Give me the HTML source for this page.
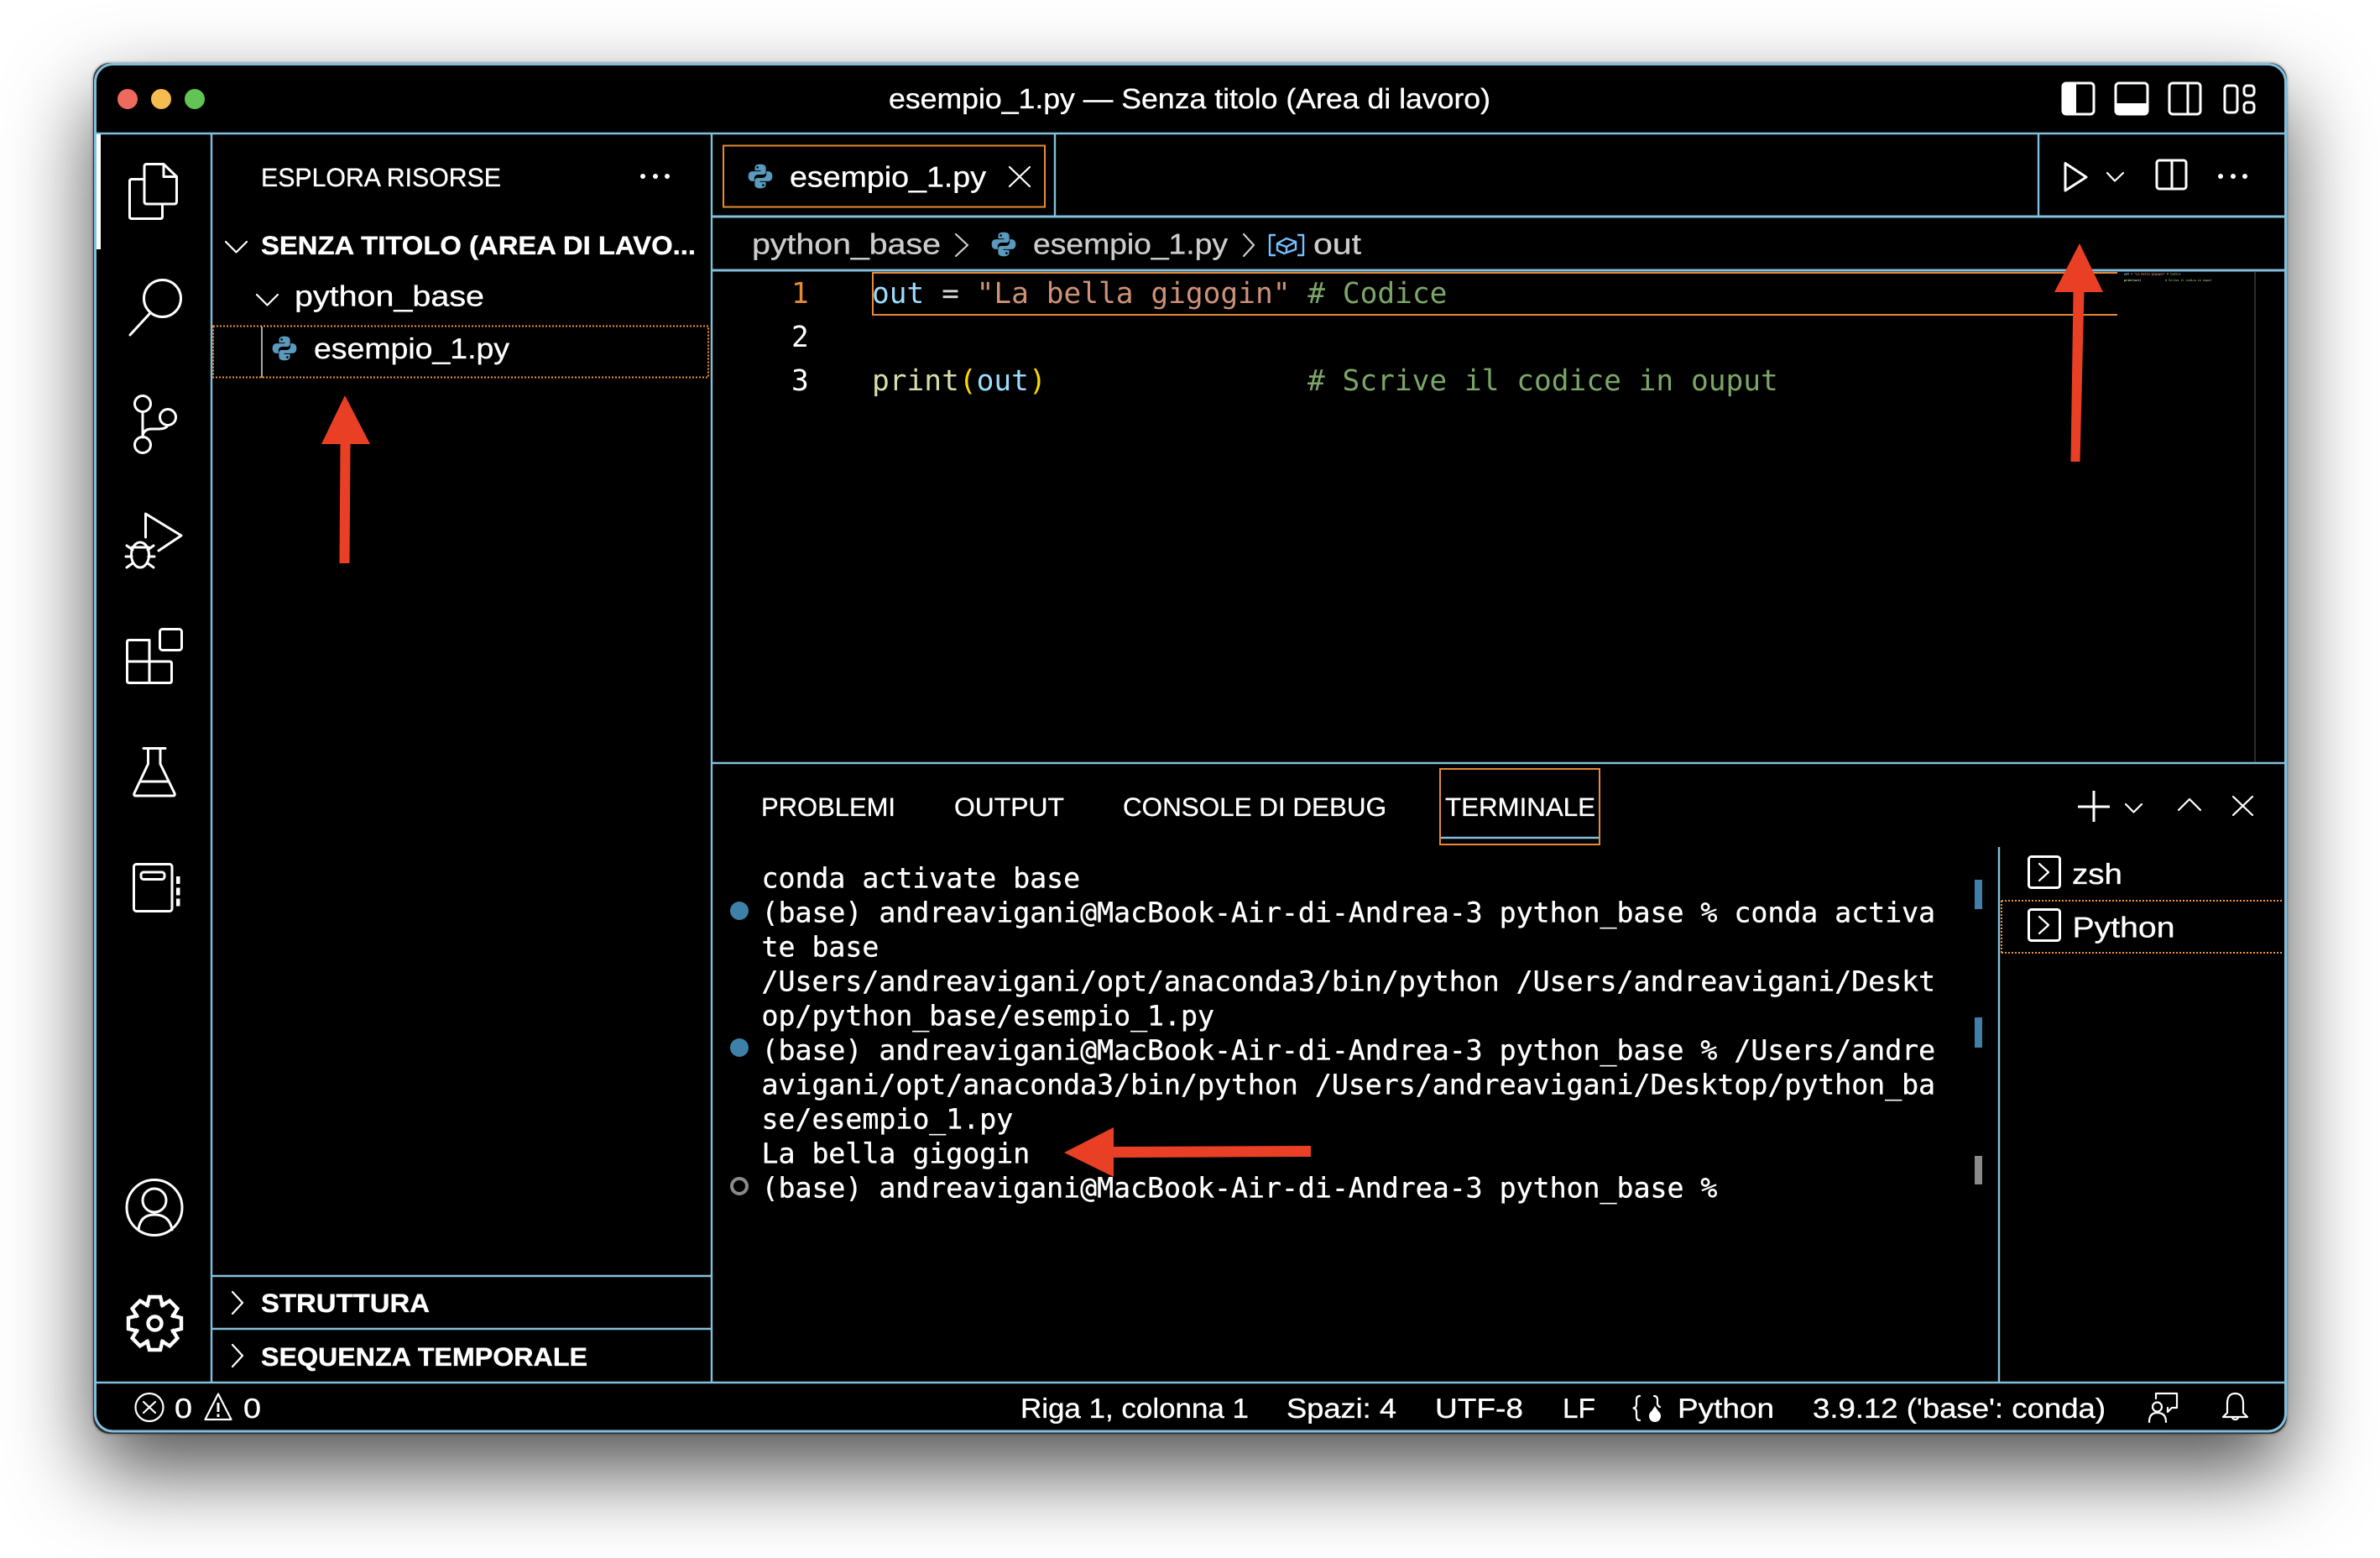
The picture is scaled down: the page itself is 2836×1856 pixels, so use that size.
<!DOCTYPE html>
<html lang="it">
<head>
<meta charset="utf-8">
<title>esempio_1.py</title>
<style>
html,body{margin:0;padding:0;background:#fff;width:2836px;height:1856px;overflow:hidden}
#win{position:absolute;left:111px;top:75px;width:2614px;height:1633px;border-radius:20px;background:#2e2e2e;box-shadow:0 44px 100px rgba(0,0,0,.69),0 0 3px rgba(0,0,0,.5)}
svg{position:absolute;left:0;top:0}
text{font-family:"Liberation Sans",sans-serif;fill:#fff;text-rendering:geometricPrecision;white-space:pre;stroke:#fff;stroke-width:.35px}
.b{font-weight:700}
.m{font-family:"DejaVu Sans Mono","Liberation Mono",monospace}
.t{font-size:33.2px}
.e{font-size:34.5px;stroke:none}
.i{fill:none;stroke:#fff;stroke-width:3;stroke-linejoin:round;stroke-linecap:round}
.j{fill:none;stroke:#fff;stroke-width:2.2;stroke-linejoin:round;stroke-linecap:round}
.l{stroke:#82bfdc;fill:none}
</style>
</head>
<body>
<div id="win"></div>
<svg width="2836" height="1856" viewBox="0 0 2836 1856" xmlns="http://www.w3.org/2000/svg">
<defs>
<symbol id="py" viewBox="0 0 23 23">
<path fill="#5b9abf" d="M11.6.5C7 .5 6.5 2.4 6.5 4V6.2H11.9V7H4.2C2 7 .5 8.7.5 11.5S2 16 4.2 16H6V13.6C6 11.4 7.6 10 9.6 10H14C15.6 10 16.6 8.9 16.6 7.4V4C16.6 2 15.2.5 11.6.5Z"/>
<circle cx="8.9" cy="3.4" r="1" fill="#000"/>
<path fill="#5b9abf" d="M11.4 22.5C16 22.5 16.5 20.6 16.5 19V16.8H11.1V16H18.8C21 16 22.5 14.3 22.5 11.5S21 7 18.8 7H17V9.4C17 11.6 15.4 13 13.4 13H9C7.4 13 6.4 14.1 6.4 15.6V19C6.4 21 7.8 22.5 11.4 22.5Z"/>
<circle cx="14.1" cy="19.6" r="1" fill="#000"/>
</symbol>
</defs>

<!-- window frame -->
<rect x="113.5" y="76.5" width="2610" height="1628.5" rx="21" fill="#000" stroke="#82bfdc" stroke-width="3"/>

<!-- structure lines -->
<path class="l" stroke-width="2.4" d="M115 159H2722"/>
<path class="l" stroke-width="2.4" d="M252 159V1647"/>
<path class="l" stroke-width="2.4" d="M848 159V1647"/>
<path class="l" stroke-width="2.4" d="M1257 159V258"/>
<path class="l" stroke-width="2.4" d="M2429 159V258"/>
<path class="l" stroke-width="3" d="M848 258H2722"/>
<path class="l" stroke-width="3" d="M848 322H2722"/>
<path class="l" stroke-width="2.4" d="M848 909H2722"/>
<path class="l" stroke-width="2.4" d="M2382 1009V1647"/>
<path class="l" stroke-width="2.4" d="M253 1520H847"/>
<path class="l" stroke-width="2.4" d="M253 1583H847"/>
<path class="l" stroke-width="2.4" d="M115 1647H2722"/>
<path stroke="#3a3a3a" stroke-width="1.5" d="M2687 324V908"/>

<!-- traffic lights -->
<circle cx="152" cy="118" r="12" fill="#ee6a5f"/>
<circle cx="192" cy="118" r="12" fill="#f5bd4f"/>
<circle cx="232" cy="118" r="12" fill="#61c454"/>

<!-- title -->
<text x="1059" y="129" font-size="33.5" textLength="717" lengthAdjust="spacingAndGlyphs">esempio_1.py — Senza titolo (Area di lavoro)</text>

<!-- layout icons -->
<rect x="2458" y="99" width="37" height="37" rx="4" fill="none" stroke="#fff" stroke-width="3"/>
<path fill="#fff" d="M2462 98H2474V137H2462Q2457 137 2457 132V103Q2457 98 2462 98Z"/>
<rect x="2521" y="99" width="38" height="37" rx="4" fill="none" stroke="#fff" stroke-width="3"/>
<path fill="#fff" d="M2520 123H2560V132Q2560 137 2555 137H2525Q2520 137 2520 132Z"/>
<rect x="2585" y="99" width="37" height="37" rx="4" fill="none" stroke="#fff" stroke-width="3"/>
<path stroke="#fff" stroke-width="3" d="M2607 99V136"/>
<rect x="2651" y="102" width="15" height="32" rx="4" fill="none" stroke="#fff" stroke-width="3"/>
<rect x="2674" y="102" width="12" height="12" rx="4" fill="none" stroke="#fff" stroke-width="3"/>
<rect x="2674" y="122" width="12" height="12" rx="4" fill="none" stroke="#fff" stroke-width="3"/>

<!-- activity bar -->
<rect x="115" y="160" width="5" height="137" fill="#fff"/>
<g class="i">
<path d="M175 195.5H195L210.5 210.5V240Q210.5 243 207.5 243H175Q172 243 172 240V198.5Q172 195.5 175 195.5Z"/>
<path d="M195 196V210.5H210"/>
<path d="M172 213.5H157Q154.5 213.5 154.5 216V258Q154.5 260.5 157 260.5H191Q193.5 260.5 193.5 258V244"/>
<circle cx="193.5" cy="355.5" r="22"/>
<path d="M178 374L155 399"/>
<circle cx="170" cy="481" r="9.5"/>
<circle cx="170" cy="530" r="9.5"/>
<circle cx="200" cy="497" r="9.5"/>
<path d="M170 490.5V520.5"/>
<path d="M170 521Q170 511 181 511H189Q198 511 200 506.5"/>
<path d="M173.5 640V612L216 638L189 656"/>
<ellipse cx="167" cy="661" rx="10.5" ry="15"/>
<path d="M157 652H177M151 650L158 655M150 663H157M151 676L158 671M183 650L176 655M184 663H177M183 676L176 671"/>
<path d="M154 762.5H178V813.5H154Q151.5 813.5 151.5 811V765Q151.5 762.5 154 762.5ZM151.5 788H202Q204.5 788 204.5 790.5V811Q204.5 813.5 202 813.5H178"/>
<rect x="190.5" y="749.5" width="26" height="25" rx="3"/>
<path d="M171 891.5H197M176.5 891.5V910L160 945Q159 948 162 948H206Q209 948 208 945L191 910V891.5M168 931H200"/>
<rect x="159.5" y="1029.5" width="45.5" height="56" rx="3"/>
<rect x="168" y="1039" width="28" height="8.5" rx="3"/>
</g>
<path fill="#fff" d="M210 1044h4.5v9h-4.5zM210 1057.5h4.5v9h-4.5zM210 1070.5h4.5v9h-4.5z"/>
<g class="i">
<circle cx="184" cy="1438.5" r="33"/>
<circle cx="184" cy="1430" r="14"/>
<path d="M165 1465Q167 1447 184 1447Q202 1447 205 1465"/>
</g>
<g fill="none" stroke="#fff" stroke-width="4.4" stroke-linejoin="miter" stroke-linecap="square" transform="translate(184.5 1576.5)">
<path d="M-9-21.5L-6.5-31.5H6.5L9-21.5"/>
<path transform="rotate(45)" d="M-9-21.5L-6.5-31.5H6.5L9-21.5"/>
<path transform="rotate(90)" d="M-9-21.5L-6.5-31.5H6.5L9-21.5"/>
<path transform="rotate(135)" d="M-9-21.5L-6.5-31.5H6.5L9-21.5"/>
<path transform="rotate(180)" d="M-9-21.5L-6.5-31.5H6.5L9-21.5"/>
<path transform="rotate(225)" d="M-9-21.5L-6.5-31.5H6.5L9-21.5"/>
<path transform="rotate(270)" d="M-9-21.5L-6.5-31.5H6.5L9-21.5"/>
<path transform="rotate(315)" d="M-9-21.5L-6.5-31.5H6.5L9-21.5"/>
<circle cx="0" cy="0" r="8"/>
</g>

<!-- sidebar -->
<text x="311" y="222" font-size="31" textLength="286" lengthAdjust="spacingAndGlyphs">ESPLORA RISORSE</text>
<circle cx="766" cy="210" r="3" fill="#fff"/><circle cx="781" cy="210" r="3" fill="#fff"/><circle cx="795" cy="210" r="3" fill="#fff"/>
<path class="j" d="M269 288L281.5 300.5L294 288"/>
<text class="b" x="311" y="303" font-size="31" textLength="518" lengthAdjust="spacingAndGlyphs">SENZA TITOLO (AREA DI LAVO...</text>
<path class="j" d="M306 351L318.5 363.5L331 351"/>
<text x="351" y="364.500" font-size="34.5" textLength="226" lengthAdjust="spacingAndGlyphs">python_base</text>
<rect x="254" y="388.5" width="590" height="61" fill="none" stroke="#f0923a" stroke-width="2" stroke-dasharray="2 2"/>
<path stroke="#a8a8a8" stroke-width="2" d="M312 389V450"/>
<use href="#py" x="324" y="400" width="30" height="30"/>
<text x="374" y="427" font-size="34.5" textLength="233" lengthAdjust="spacingAndGlyphs">esempio_1.py</text>
<path class="j" d="M277 1539L289 1552L277 1565"/>
<text class="b" x="311" y="1563" font-size="31" textLength="201" lengthAdjust="spacingAndGlyphs">STRUTTURA</text>
<path class="j" d="M277 1602L289 1615L277 1628"/>
<text class="b" x="311" y="1627" font-size="31" textLength="389" lengthAdjust="spacingAndGlyphs">SEQUENZA TEMPORALE</text>

<!-- tab -->
<rect x="862" y="173.5" width="383" height="73" fill="none" stroke="#e88a35" stroke-width="2"/>
<use href="#py" x="891" y="195" width="30" height="30"/>
<text x="941" y="222.500" font-size="34.5" textLength="234" lengthAdjust="spacingAndGlyphs">esempio_1.py</text>
<path class="j" d="M1203 199L1227 222M1227 199L1203 222"/>

<!-- editor actions -->
<path class="i" d="M2461 194.5V227L2486 211Z"/>
<path class="j" d="M2511 206L2520 215.5L2530 206"/>
<rect x="2570" y="191" width="35" height="34" rx="3" class="i"/>
<path stroke="#fff" stroke-width="3" d="M2588 191V225"/>
<circle cx="2646" cy="210" r="3" fill="#fff"/><circle cx="2661" cy="210" r="3" fill="#fff"/><circle cx="2675" cy="210" r="3" fill="#fff"/>

<!-- breadcrumbs -->
<text x="896" y="302.500" font-size="34.5" style="fill:#ccc;stroke:#ccc" textLength="225" lengthAdjust="spacingAndGlyphs">python_base</text>
<path fill="none" stroke="#ccc" stroke-width="2.2" stroke-linecap="round" stroke-linejoin="round" d="M1139 279L1153 292L1139 305"/>
<use href="#py" x="1181" y="276" width="30" height="30"/>
<text x="1231" y="302.500" font-size="34.5" style="fill:#ccc;stroke:#ccc" textLength="232" lengthAdjust="spacingAndGlyphs">esempio_1.py</text>
<path fill="none" stroke="#ccc" stroke-width="2.2" stroke-linecap="round" stroke-linejoin="round" d="M1482 279L1494 292L1482 305"/>
<g fill="none" stroke="#75beff" stroke-width="2.4" stroke-linejoin="round">
<path d="M1520 280H1513V304H1520M1546 280H1553V304H1546"/>
<path d="M1533 284L1544 288V297L1530 302L1522 298V290ZM1522 290L1533 294L1544 288M1533 294V301"/>
</g>
<text x="1565" y="302.500" font-size="34.5" style="fill:#ccc;stroke:#ccc" textLength="57" lengthAdjust="spacingAndGlyphs">out</text>

<!-- current line -->
<path fill="none" stroke="#e88a35" stroke-width="2" d="M2523 325H1040V375H2523"/>

<!-- editor -->
<text class="m e" x="943" y="361" style="fill:#e88a35">1</text>
<text class="m e" x="943" y="413">2</text>
<text class="m e" x="943" y="465">3</text>
<text class="m e" x="1039" y="361"><tspan style="fill:#9cdcfe">out</tspan><tspan style="fill:#d4d4d4"> = </tspan><tspan style="fill:#ce9178">"La bella gigogin"</tspan> <tspan style="fill:#7ca668"># Codice</tspan></text>
<text class="m e" x="1039" y="465"><tspan style="fill:#dcdcaa">print</tspan><tspan style="fill:#ffd700">(</tspan><tspan style="fill:#9cdcfe">out</tspan><tspan style="fill:#ffd700">)</tspan></text>
<text class="m e" x="1558" y="465" style="fill:#7ca668"># Scrive il codice in ouput</text>

<!-- minimap -->
<text class="m" x="2531" y="327.5" font-size="3.4" style="stroke:none;font-weight:700"><tspan style="fill:#9cdcfe">out</tspan><tspan style="fill:#d4d4d4"> = </tspan><tspan style="fill:#ce9178">"La bella gigogin"</tspan> <tspan style="fill:#7ca668"># Codice</tspan></text>
<text class="m" x="2531" y="335" font-size="3.4" style="stroke:none;font-weight:700"><tspan style="fill:#dcdcaa">print</tspan><tspan style="fill:#ffd700">(</tspan><tspan style="fill:#9cdcfe">out</tspan><tspan style="fill:#ffd700">)</tspan><tspan style="fill:#7ca668">              # Scrive il codice in ouput</tspan></text>

<!-- panel tabs -->
<text x="907" y="972" font-size="31" textLength="160" lengthAdjust="spacingAndGlyphs">PROBLEMI</text>
<text x="1137" y="972" font-size="31" textLength="131" lengthAdjust="spacingAndGlyphs">OUTPUT</text>
<text x="1338" y="972" font-size="31" textLength="314" lengthAdjust="spacingAndGlyphs">CONSOLE DI DEBUG</text>
<text x="1722" y="972" font-size="31" textLength="179" lengthAdjust="spacingAndGlyphs">TERMINALE</text>
<rect x="1716" y="916" width="190" height="90" fill="none" stroke="#e88a35" stroke-width="2"/>
<path class="l" stroke-width="2.4" d="M1717 998H1905"/>

<!-- panel actions -->
<path stroke="#fff" stroke-width="3" d="M2476 961H2514M2495 942V979"/>
<path class="j" d="M2533 958L2542.5 967.5L2552 958"/>
<path class="j" d="M2596 965L2609 952L2622 965"/>
<path class="j" d="M2661 949L2684 971M2684 949L2661 971"/>

<!-- terminal -->
<circle cx="881" cy="1085" r="11" fill="#3e80a8"/>
<circle cx="881" cy="1248" r="11" fill="#3e80a8"/>
<circle cx="881" cy="1413" r="9" fill="none" stroke="#8a8a8a" stroke-width="4"/>
<text class="m t" x="907.5" y="1057.500">conda activate base</text>
<text class="m t" x="907.5" y="1098.500">(base) andreavigani@MacBook-Air-di-Andrea-3 python_base % conda activa</text>
<text class="m t" x="907.5" y="1139.500">te base</text>
<text class="m t" x="907.5" y="1180.500">/Users/andreavigani/opt/anaconda3/bin/python /Users/andreavigani/Deskt</text>
<text class="m t" x="907.5" y="1221.500">op/python_base/esempio_1.py</text>
<text class="m t" x="907.5" y="1262.500">(base) andreavigani@MacBook-Air-di-Andrea-3 python_base % /Users/andre</text>
<text class="m t" x="907.5" y="1303.500">avigani/opt/anaconda3/bin/python /Users/andreavigani/Desktop/python_ba</text>
<text class="m t" x="907.5" y="1344.500">se/esempio_1.py</text>
<text class="m t" x="907.5" y="1385.500">La bella gigogin</text>
<text class="m t" x="907.5" y="1426.500">(base) andreavigani@MacBook-Air-di-Andrea-3 python_base %</text>
<rect x="2353" y="1048" width="9" height="35" fill="#3e80a8"/>
<rect x="2353" y="1212" width="9" height="36" fill="#3e80a8"/>
<rect x="2353" y="1377" width="9" height="34" fill="#8a8a8a"/>

<!-- terminal list -->
<rect x="2417.5" y="1020.5" width="37" height="37" rx="3" class="i"/>
<path class="j" d="M2430 1029L2441 1039L2430 1049"/>
<text x="2469" y="1053" font-size="34.5" textLength="60" lengthAdjust="spacingAndGlyphs">zsh</text>
<path fill="none" stroke="#f0923a" stroke-width="2" stroke-dasharray="2 2" d="M2385 1073H2720M2385 1135H2720M2385 1073V1135"/>
<rect x="2417.5" y="1083.5" width="37" height="37" rx="3" class="i"/>
<path class="j" d="M2430 1092L2441 1102L2430 1112"/>
<text x="2469.500" y="1116.500" font-size="34.5" textLength="122" lengthAdjust="spacingAndGlyphs">Python</text>

<!-- status bar -->
<circle cx="178" cy="1676.5" r="16.5" class="j"/>
<path class="j" d="M171 1670L185 1683M185 1670L171 1683"/>
<text x="208" y="1689" font-size="33" textLength="21" lengthAdjust="spacingAndGlyphs">0</text>
<path class="j" d="M260 1660.5L244.5 1691H275.5Z"/>
<path stroke="#fff" stroke-width="3" d="M260 1671V1682M260 1684.5V1688"/>
<text x="290" y="1689" font-size="33" textLength="21" lengthAdjust="spacingAndGlyphs">0</text>
<text x="1216" y="1689" font-size="33" textLength="272" lengthAdjust="spacingAndGlyphs">Riga 1, colonna 1</text>
<text x="1533" y="1689" font-size="33" textLength="131" lengthAdjust="spacingAndGlyphs">Spazi: 4</text>
<text x="1710" y="1689" font-size="33" textLength="105" lengthAdjust="spacingAndGlyphs">UTF-8</text>
<text x="1862" y="1689" font-size="33" textLength="39" lengthAdjust="spacingAndGlyphs">LF</text>
<path class="j" d="M1954 1663Q1950 1663 1950 1668V1673Q1950 1677 1946.5 1677.5Q1950 1678 1950 1682V1687Q1950 1692 1954 1692"/>
<path class="j" d="M1971 1663Q1975 1663 1975 1668V1672Q1975 1675 1978 1676"/>
<circle cx="1972" cy="1687" r="7" fill="#fff"/>
<path fill="#fff" d="M1972 1675L1966 1684H1978Z"/>
<text x="1999" y="1689" font-size="33" textLength="115" lengthAdjust="spacingAndGlyphs">Python</text>
<text x="2160" y="1689" font-size="33" textLength="349" lengthAdjust="spacingAndGlyphs">3.9.12 ('base': conda)</text>
<path class="j" d="M2569 1666V1660H2594V1677H2588L2583 1682V1677"/>
<circle cx="2570.5" cy="1676" r="5.5" class="j"/>
<path class="j" d="M2561 1694Q2561 1683 2570.5 1683Q2581 1683 2581 1694"/>
<path class="j" d="M2663.5 1660C2656 1660 2654 1666 2654 1672V1683L2649 1688H2678L2673 1683V1672C2673 1666 2671 1660 2663.5 1660Z"/>
<path class="j" d="M2660 1689A4 4 0 0 0 2667 1689"/>

<!-- red annotation arrows -->
<g fill="#e94025">
<path d="M411 471L441 529H417.5L416.5 671H404.5L405.5 529H383Z"/>
<path d="M2478 290L2506 348H2483.5L2478.5 550H2467.5L2470.5 348H2448Z"/>
<path d="M1268 1373L1327 1343V1366L1562 1365V1378L1327 1379V1402Z"/>
</g>
</svg>
</body>
</html>
